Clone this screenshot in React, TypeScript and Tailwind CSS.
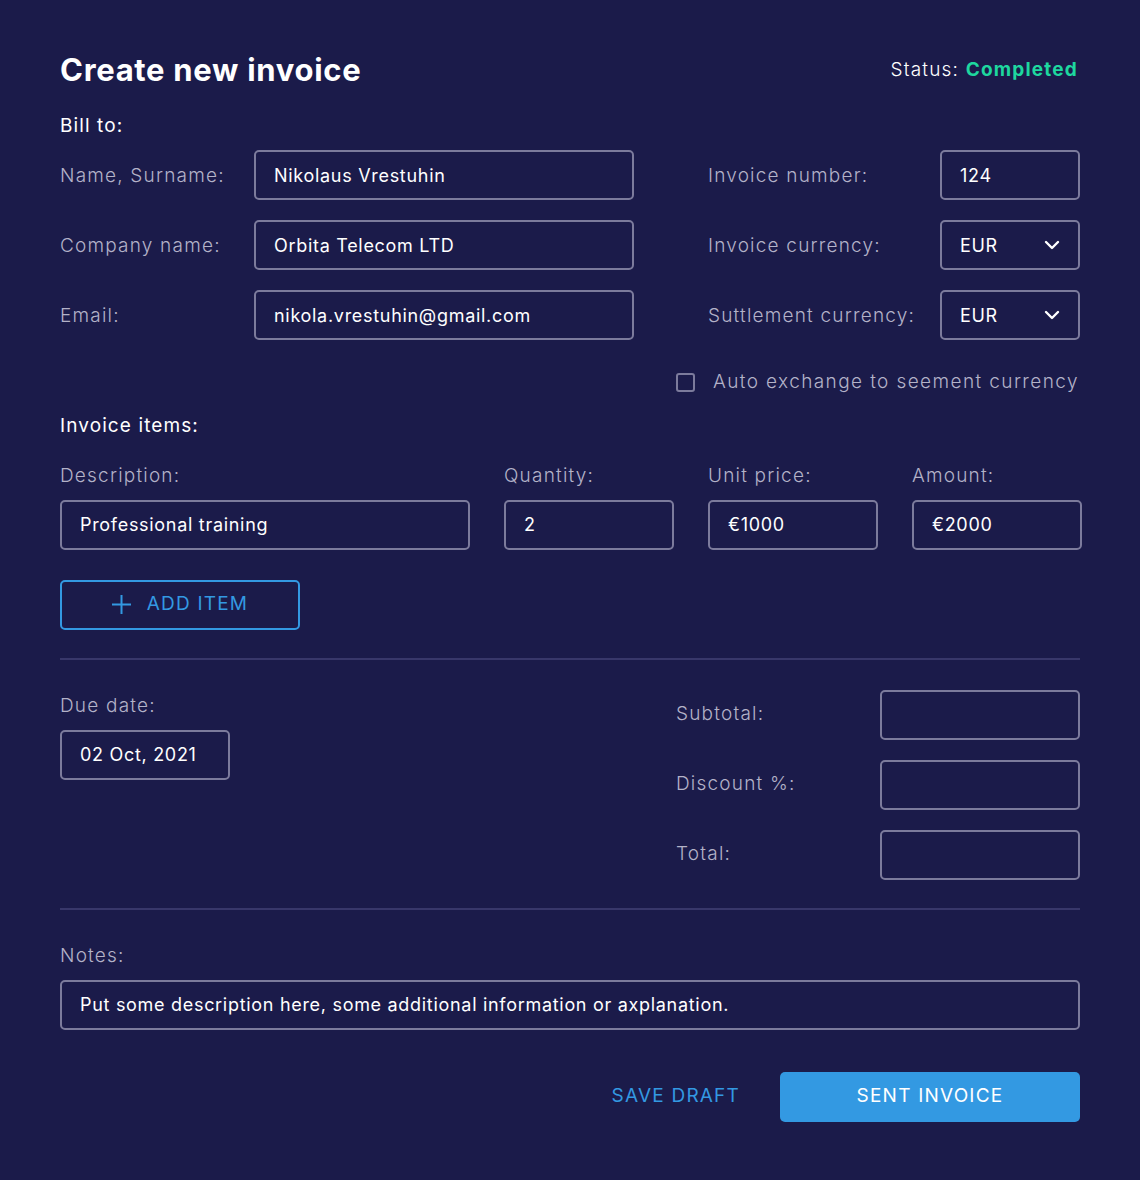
import React from "react";

const font = { fontFamily: "Inter, 'Noto Sans', sans-serif" };

function Field({ value, className = "" }: { value: string; className?: string }) {
  return (
    <div className={`h-[50px] shrink-0 border-2 border-[#7c7b9c] rounded-[5px] flex items-center px-[18px] text-[18px] text-white font-normal tracking-[0.7px] ${className}`}>
      {value}
    </div>
  );
}

function Select({ value }: { value: string }) {
  return (
    <div className="h-[50px] w-[140px] border-2 border-[#7c7b9c] rounded-[5px] flex items-center justify-between pl-[18px] pr-[18px] text-[18px] text-white font-normal tracking-[0.7px]">
      <span>{value}</span>
      <svg width="16" height="10" viewBox="0 0 16 10" fill="none">
        <path d="M2 2l6 6 6-6" stroke="white" strokeWidth="2.4" strokeLinecap="round" strokeLinejoin="round" />
      </svg>
    </div>
  );
}

export default function App() {
  const label = "text-[19px] font-light tracking-[1.2px] text-[#b3b2c8]";
  const head = "text-[19px] text-white tracking-[1.1px] h-[24px] leading-[24px]";
  return (
    <div style={font} className="w-[1140px] h-[1180px] bg-[#1b1b4a] px-[60px] pt-[50px] flex flex-col">
      <div className="flex items-center justify-between h-[40px]">
        <h1 className="text-[31px] font-bold text-white tracking-[0.7px]">Create new invoice</h1>
        <div className="text-[19px] text-white font-light tracking-[1.2px] mr-[2px]">
          Status: <span className="font-bold text-[#1ed79f]">Completed</span>
        </div>
      </div>
      <div className={`mt-[24px] ${head}`}>Bill to:</div>

      <div className="mt-[12px] flex justify-between">
        <div className="flex flex-col gap-[20px]">
          {[
            ["Name, Surname:", "Nikolaus Vrestuhin"],
            ["Company name:", "Orbita Telecom LTD"],
            ["Email:", "nikola.vrestuhin@gmail.com"],
          ].map(([l, v]) => (
            <div key={l} className="flex items-center">
              <div className={`${label} w-[194px] whitespace-nowrap pt-[2px]`}>{l}</div>
              <Field value={v} className="w-[380px]" />
            </div>
          ))}
        </div>
        <div className="flex flex-col gap-[20px]">
          <div className="flex items-center">
            <div className={`${label} w-[232px] whitespace-nowrap pt-[2px]`}>Invoice number:</div>
            <Field value="124" className="w-[140px]" />
          </div>
          <div className="flex items-center">
            <div className={`${label} w-[232px] whitespace-nowrap pt-[2px]`}>Invoice currency:</div>
            <Select value="EUR" />
          </div>
          <div className="flex items-center">
            <div className={`${label} w-[232px] whitespace-nowrap pt-[2px]`}>Suttlement currency:</div>
            <Select value="EUR" />
          </div>
          <div className="flex items-center mt-[8px] -ml-[32px]">
            <div className="w-[19px] h-[19px] border-2 border-[#7c7b9c] rounded-[3px] mr-[18px]" />
            <div className={`${label} whitespace-nowrap tracking-[1.4px]`}>Auto exchange to seement currency</div>
          </div>
        </div>
      </div>

      <div className={`mt-[17px] ${head}`}>Invoice items:</div>
      <div className="mt-[26px] flex gap-[34px]">
        <div className="flex flex-col gap-[12px] w-[410px] shrink-0">
          <div className={`${label} h-[24px] leading-[24px]`}>Description:</div>
          <Field value="Professional training" />
        </div>
        <div className="flex flex-col gap-[12px] w-[170px] shrink-0">
          <div className={`${label} h-[24px] leading-[24px]`}>Quantity:</div>
          <Field value="2" />
        </div>
        <div className="flex flex-col gap-[12px] w-[170px] shrink-0">
          <div className={`${label} h-[24px] leading-[24px]`}>Unit price:</div>
          <Field value="€1000" />
        </div>
        <div className="flex flex-col gap-[12px] w-[170px] shrink-0">
          <div className={`${label} h-[24px] leading-[24px]`}>Amount:</div>
          <Field value="€2000" />
        </div>
      </div>

      <div className="mt-[30px] w-[240px] h-[50px] border-2 border-[#3399e2] rounded-[5px] flex items-center justify-center gap-[16px] text-[#3399e2] text-[19px] tracking-[1.2px]">
        <svg width="19" height="19" viewBox="0 0 19 19">
          <path d="M9.5 0v19M0 9.5h19" stroke="#3399e2" strokeWidth="2" />
        </svg>
        <span>ADD ITEM</span>
      </div>

      <div className="mt-[28px] h-[2px] bg-[#38376a]" />

      <div className="mt-[30px] flex justify-between">
        <div className="flex flex-col gap-[12px] pt-[4px]">
          <div className={`${label} h-[24px] leading-[24px]`}>Due date:</div>
          <Field value="02 Oct, 2021" className="w-[170px]" />
        </div>
        <div className="flex flex-col gap-[20px]">
          {["Subtotal:", "Discount %:", "Total:"].map((l) => (
            <div key={l} className="flex items-center">
              <div className={`${label} w-[204px]`}>{l}</div>
              <div className="w-[200px] h-[50px] border-2 border-[#7c7b9c] rounded-[5px]" />
            </div>
          ))}
        </div>
      </div>

      <div className="mt-[28px] h-[2px] bg-[#38376a]" />

      <div className="mt-[34px] flex flex-col gap-[12px]">
        <div className={`${label} h-[24px] leading-[24px]`}>Notes:</div>
        <Field value="Put some description here, some additional information or axplanation." />
      </div>

      <div className="mt-[42px] flex justify-end items-center">
        <div className="text-[19px] text-[#3399e2] tracking-[1.2px] mr-[40px]">SAVE DRAFT</div>
        <div className="w-[300px] h-[50px] rounded-[5px] bg-[#3399e2] flex items-center justify-center text-white text-[19px] tracking-[1.2px]">
          SENT INVOICE
        </div>
      </div>
    </div>
  );
}
